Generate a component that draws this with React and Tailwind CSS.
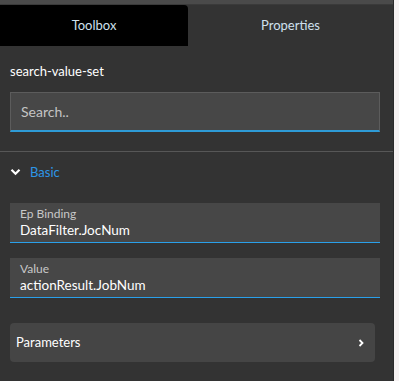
export default function App() {
  return (
    <div className="flex h-[381px] w-[399px] bg-[#f6f2f2]" style={{ fontFamily: "Lato, 'Open Sans', sans-serif" }}>
      <div className="flex h-full w-[394px] flex-col border-r border-[#2a2a2a] bg-[#333333]">
        <div className="h-[4px] bg-[#4a4a4a]" />
        <div className="h-[1px] bg-[#3a3a3a]" />
        <div className="flex h-[41px]">
          <div className="flex w-[188px] items-center justify-center rounded-tr-sm bg-black text-[13px] text-[#cfe0ee]">Toolbox</div>
          <div className="flex flex-1 items-center justify-center text-[13px] text-[#cfe0ee]">Properties</div>
        </div>
        <div className="px-[10px] pt-[16px] text-[13px] text-white">search-value-set</div>
        <div className="mx-[10px] mt-[10px] flex h-[40px] w-[370px] items-center border border-b-2 border-[#5c5c5c] border-b-[#2e9bd6] bg-[#474747] px-[10px] text-[14px] text-[#c4c4c4]">
          Search..
        </div>
        <div className="mt-[19px] h-[1px] bg-[#575757]" />
        <div className="flex items-center gap-[9px] px-[10px] pt-[11px] text-[13px] text-[#2d96e8]">
          <svg width="11" height="8" viewBox="0 0 11 8">
            <path d="M1.5 1.8 L5.5 5.8 L9.5 1.8" stroke="#ffffff" strokeWidth="2.2" fill="none" />
          </svg>
          <span>Basic</span>
        </div>
        <div className="mx-[10px] mt-[21px] flex h-[40px] w-[370px] flex-col justify-center border-b border-[#2aa0ea] bg-[#474747] px-[10px]">
          <div className="text-[12px] leading-[14px] text-[#c8c8c8]">Ep Binding</div>
          <div className="text-[13.5px] leading-[18px] text-white">DataFilter.JocNum</div>
        </div>
        <div className="mx-[10px] mt-[15px] flex h-[40px] w-[370px] flex-col justify-center border-b border-[#2aa0ea] bg-[#474747] px-[10px]">
          <div className="text-[12px] leading-[14px] text-[#c8c8c8]">Value</div>
          <div className="text-[13.5px] leading-[18px] text-white">actionResult.JobNum</div>
        </div>
        <div className="mx-[10px] mt-[25px] flex h-[39px] w-[365px] items-center justify-between rounded-[4px] bg-[#454545] pl-[6px] pr-[10px] text-[13px] text-white">
          <span>Parameters</span>
          <svg width="8" height="10" viewBox="0 0 8 10">
            <path d="M2.5 2 L5.5 5 L2.5 8" stroke="#ffffff" strokeWidth="1.8" fill="none" />
          </svg>
        </div>
      </div>
    </div>
  );
}
